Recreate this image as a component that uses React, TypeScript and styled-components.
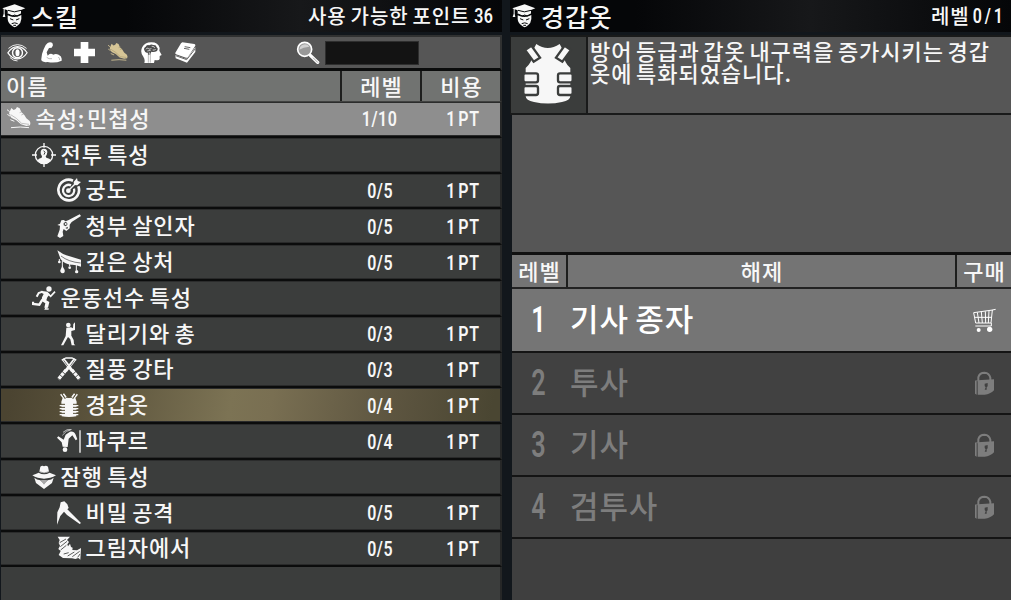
import type { ReactNode } from "react";
import styled, { createGlobalStyle, css } from "styled-components";

const COLOR_GUTTER = "#12171c";
const COLOR_LINE = "#0b0c0c";
const COLOR_ROW = "#3b3d3c";
const COLOR_PANEL = "#565656";
const COLOR_ACTIVE = "#d6c596";

const GlobalStyle = createGlobalStyle`
  * {
    box-sizing: border-box;
  }

  body {
    margin: 0;
    overflow: hidden;
    background-color: ${COLOR_GUTTER};
  }
`;

const StyledWindow = styled.main`
  display: grid;
  grid-template-columns: 502px 501px;
  gap: 8px;
  width: 1011px;
  height: 600px;
  overflow: hidden;
  background-color: ${COLOR_GUTTER};
  color: #f7f7f7;
  font-family: "Noto Sans CJK KR", sans-serif;
  font-size: 22px;
  font-weight: 500;
  letter-spacing: 0.9px;
  line-height: 24px;
  word-spacing: -1.4px;
  white-space: nowrap;
`;

const StyledPanel = styled.section`
  display: flex;
  flex-direction: column;
  min-width: 0;
  height: 600px;
  overflow: hidden;
`;

const StyledTitleBar = styled.header`
  display: flex;
  align-items: center;
  flex: none;
  height: 32px;
  margin-bottom: 3px;
  padding: 0 8px 0 2px;
  background: linear-gradient(90deg, #050608, #050608 25%, #17181a 60%, #050608);
`;

const StyledTitle = styled.h1`
  flex: 1;
  margin: 0 0 0 5px;
  font-size: 25px;
  font-weight: 500;
  line-height: 32px;
`;

const StyledTitleNote = styled.span<{ $gap: number }>`
  display: flex;
  align-items: center;
  gap: ${({ $gap }) => $gap}px;
  font-size: 20px;
`;

const StyledDigits = styled.span<{ $size?: number; $width?: number }>`
  display: inline-block;
  font-family: Roboto, sans-serif;
  font-size: ${({ $size = 21 }) => $size}px;
  font-weight: 600;
  letter-spacing: 0.8px;
  word-spacing: -3px;
  transform: scaleX(${({ $width = 0.76 }) => $width});
`;

const StyledNoteDigits = styled(StyledDigits)`
  margin-left: -8px;
  transform-origin: right;
`;

const StyledToolbar = styled.div`
  display: flex;
  align-items: center;
  flex: none;
  height: 36px;
  margin-left: 1px;
  border-top: 2px solid #303131;
  border-right: 2px solid #303131;
  border-bottom: 3px solid ${COLOR_LINE};
  background-color: ${COLOR_PANEL};
`;

const StyledCategory = styled.button<{ $active?: boolean }>`
  display: flex;
  align-items: center;
  justify-content: center;
  width: 33.5px;
  height: 28px;
  padding: 0;
  border: none;
  background: none;
  color: ${({ $active }) => ($active ? COLOR_ACTIVE : "#fff")};
`;

const StyledSearch = styled.label`
  display: flex;
  align-items: center;
  gap: 5px;
  margin-left: 94px;
`;

const StyledSearchInput = styled.input`
  width: 94px;
  height: 24px;
  padding: 0 4px;
  border: 1px solid #2e2e2e;
  background-color: #131313;
  color: #fff;
`;

const skillColumns = css`
  display: grid;
  grid-template-columns: 1fr 80px 80px;
  align-items: center;
  flex: none;
  margin-left: 1px;
  border-right: 2px solid #262727;
`;

const StyledSkillHeader = styled.div`
  ${skillColumns}
  height: 31px;
  background-color: #717371;
  border-bottom: 1px solid #414241;
`;

const StyledHeaderCell = styled.span<{ $align?: string }>`
  display: flex;
  align-items: center;
  justify-content: ${({ $align = "center" }) => $align};
  height: 100%;
  padding-left: ${({ $align }) => ($align ? "5px" : "1px")};
  padding-bottom: 3px;

  & + & {
    border-left: 2px solid #1d1e1d;
  }
`;

type Tone = "attribute" | "normal" | "selected";

const toneBackground: Record<Tone, string> = {
  attribute: "#8e8e8e",
  normal: COLOR_ROW,
  selected:
    "linear-gradient(100deg, #4b4431 2%, #5a523b 18%, #7c7354 46%, #796f52 54%, #5d5540 78%, #4a4632 98%)",
};

const StyledSkillRow = styled.div<{ $tone: Tone }>`
  ${skillColumns}
  height: 35.8px;
  padding-bottom: 2px;
  border-bottom: 2px solid ${COLOR_LINE};
  background: ${({ $tone }) => toneBackground[$tone]};
  box-shadow: inset 0 -1px #292a2a, inset 0 1px #2b2c2c;
  word-spacing: ${({ $tone }) => ($tone === "attribute" ? -4 : -1.4)}px;
`;

const StyledSkillName = styled.div<{ $level: number }>`
  display: flex;
  align-items: center;
  gap: 5px;
  padding-left: ${({ $level }) => 5.5 + $level * 25}px;
  padding-bottom: 2px;

  svg {
    flex: none;
    margin-top: 4px;
  }
`;

const StyledValue = styled.div`
  text-align: center;
`;

const StyledCost = styled(StyledValue)`
  padding-left: 5px;
`;

const StyledSkillFooter = styled.div`
  flex: 1;
  margin-left: 1px;
  border-right: 2px solid #262727;
  background-color: ${COLOR_ROW};
`;

const StyledSummary = styled.div`
  display: grid;
  grid-template-columns: 77px 1fr;
  flex: none;
  height: 80px;
  border: solid #191a1a;
  border-width: 2px 0 2px 1px;
`;

const StyledSummaryIcon = styled.div`
  display: flex;
  align-items: center;
  justify-content: center;
  padding: 0 1px 5px 0;
  border-right: 2px solid #191a1a;
  background-color: ${COLOR_ROW};
`;

const StyledDescription = styled.p`
  margin: 0;
  padding: 2px 0 0 2px;
  background-color: ${COLOR_PANEL};
  line-height: 22px;
  letter-spacing: 0.95px;
  word-spacing: -2.2px;
`;

const StyledBlank = styled.div`
  flex: none;
  height: 137px;
  margin-left: 2px;
  background-color: ${COLOR_PANEL};
`;

const rankColumns = css`
  display: grid;
  grid-template-columns: 54px 1fr 56px;
  align-items: center;
  flex: none;
  margin-left: 2px;
`;

const StyledRankHeader = styled.div`
  ${rankColumns}
  height: 37px;
  border-top: 3px solid #101010;
  border-bottom: 2px solid #222;
  background-color: #747474;
`;

const StyledRank = styled.div<{ $locked: boolean }>`
  ${rankColumns}
  height: 62.1px;
  padding-bottom: 1px;
  background-color: ${({ $locked }) => ($locked ? "#414141" : "#757575")};
  color: ${({ $locked }) => ($locked ? "#7d7d7d" : "#fff")};
  font-size: 31px;
  line-height: 56px;

  & + & {
    border-top: 2px solid #141414;
  }
`;

const StyledRankName = styled.span`
  padding: 0 0 3px 4px;
`;

const StyledRankIcon = styled.span`
  display: flex;
  justify-content: center;
  padding-left: 1px;
`;

const StyledRankFooter = styled.div`
  flex: 1;
  margin-left: 2px;
  border-top: 2px solid #141414;
  background-color: #3f3f3f;
`;

type IconProps = { size?: number; box?: string; children?: ReactNode };

const Icon = ({ size = 24, box = "0 0 72 72", children }: IconProps) => (
  <svg width={size} height={size} viewBox={box} fill="currentColor">
    {children}
  </svg>
);

const ScholarIcon = () => (
  <Icon>
    <path d="M1 13L38 1L70 13L57 18V29Q38 40 17 29V19L8 16V29L10 39H2L5 29V15Z" />
    <path d="M17 34Q38 44 58 33V45Q57 57 48 64Q38 75 28 64Q18 57 17 45Z" />
    <g fill="none" stroke="#08090b" strokeWidth="3">
      <path d="M18 19Q37 28 57 19M18 30L31 36L38 33L45 36L57 30M24 44L34 48M52 44L42 48M29 59Q38 54 47 59M34 64H42" />
    </g>
  </Icon>
);

const EyeIcon = () => (
  <Icon size={21}>
    <g fill="none" stroke="currentColor" strokeWidth="4">
      <path d="M3 37Q18 16 36 16Q55 16 69 37Q55 58 36 58Q18 58 3 37Z" />
      <path d="M5 22Q19 9 36 9Q53 9 67 22M10 53Q21 65 36 65" strokeWidth="3" />
      <circle cx="36" cy="37" r="17" strokeWidth="5" />
    </g>
    <ellipse cx="36" cy="37" rx="7" ry="12" />
  </Icon>
);

const ArmIcon = () => (
  <Icon size={21} box="0 0 63 63">
    <path d="M20 3Q28 -1 34 3L36 10L32 17L24 18L17 31L20 41Q27 32 37 38Q44 34 53 38Q62 42 62 50V56Q42 65 20 60Q4 62 1 55Q0 40 8 22Q12 8 20 3Z" />
    <path d="M17 46Q23 52 33 50M52 45Q56 48 56 54" stroke="#999" strokeWidth="2" fill="none" />
  </Icon>
);

const PlusIcon = () => (
  <Icon size={21} box="0 0 63 63">
    <path d="M20 0H43V20H63V43H43V63H20V43H0V20H20Z" />
  </Icon>
);

const ShoeIcon = ({ size = 24, shade = "#a4a4a4" }: { size?: number; shade?: string }) => (
  <Icon size={size}>
    <path d="M13 3L20 9Q27 8 30 0L38 4L43 15L52 24L58 34L68 42Q72 48 69 55L58 57L42 52L28 40L13 32L6 19Z" />
    <path
      d="M11 23L28 34L44 49L66 52M38 17L45 14M43 24L50 21"
      stroke={shade}
      strokeWidth="2"
      fill="none"
    />
    <path
      d="M0 8L8 14M1 22L10 28M10 38L22 43M12 62L40 60L66 62"
      stroke="currentColor"
      strokeWidth="3"
      fill="none"
    />
  </Icon>
);

const BrainIcon = () => (
  <Icon size={21} box="0 0 63 63">
    <path d="M10 63Q13 52 7 44Q-4 30 4 15Q11 1 31 1Q52 1 56 18L55 26L62 39L56 42V51Q54 57 41 54L39 63Z" />
    <path
      d="M10 25Q7 18 14 14Q17 7 25 10Q31 5 37 9Q46 8 47 16Q53 20 48 27Q40 31 31 29L27 39H22L20 32Q12 34 10 25Z"
      fill="#4d4d4d"
    />
    <path
      d="M15 22Q18 15 23 20T31 18M32 13Q40 12 41 18M19 27L29 25M35 24Q42 26 44 21M25 31V60"
      stroke="currentColor"
      fill="none"
      strokeWidth="2"
    />
    <path d="M22 36V62M28 36V62" stroke="#777" strokeWidth="1.5" />
  </Icon>
);

const BookIcon = () => (
  <Icon size={21} box="0 0 63 63">
    <path d="M22 1L58 6Q63 8 60 13L39 45Q37 48 33 47L3 37Q-1 35 2 31L18 4Z" />
    <path d="M1 39L34 51L61 16V30L36 62L2 49Z" />
    <path
      d="M2 41L35 53L61 20M29 14L46 17M27 19L43 22"
      stroke="#666"
      strokeWidth="3"
      fill="none"
    />
  </Icon>
);

const SearchIcon = () => (
  <Icon>
    <path d="M43 43L65 64" stroke="#fff" strokeWidth="10" strokeLinecap="round" />
    <path d="M51 50L66 65" stroke="#777" strokeWidth="2" />
    <circle cx="26" cy="25" r="21" fill="#999" stroke="#fff" strokeWidth="5" />
    <path d="M10 26Q12 11 27 10Q37 10 40 17Q21 19 10 26Z" fill="#d0d0d0" />
  </Icon>
);

const CrosshairIcon = () => (
  <Icon>
    <circle cx="36" cy="36" r="26" fill="none" stroke="currentColor" strokeWidth="4" />
    <path d="M36 0V14M0 36H15M57 36H72M36 60V72" stroke="currentColor" strokeWidth="4" />
    <path d="M36 17Q46 17 46 28Q45 37 41 40L43 44Q54 46 57 52Q49 63 36 63Q24 63 16 53Q19 46 29 44L30 40Q25 35 26 27Q27 17 36 17Z" />
    <path d="M35 23L39 28L36 35" stroke={COLOR_ROW} strokeWidth="3" fill="none" />
  </Icon>
);

const BullseyeIcon = () => (
  <Icon>
    <g fill="none" stroke="currentColor">
      <path d="M48 8A31 31 0 1 0 64 25" strokeWidth="8" />
      <path d="M42 22A17 17 0 1 0 51 32" strokeWidth="7" />
      <path d="M33 39L60 12" strokeWidth="4" />
    </g>
    <circle cx="34" cy="38" r="7" />
    <path d="M50 12L60 0L62 9L72 12L61 22L51 21Z" />
  </Icon>
);

const RevolverIcon = () => (
  <Icon>
    <path d="M68 1L72 6L44 24L38 32V43L28 51L20 45L17 53L19 66L9 72L1 67L8 47L9 35L1 33L9 29L13 19L20 18L26 22L35 18Z" />
    <path d="M20 27L27 23L32 30L27 37L20 34ZM25 42L33 38L31 45Z" fill={COLOR_ROW} />
    <circle cx="26" cy="30" r="3" />
  </Icon>
);

const WoundIcon = () => (
  <Icon>
    <path d="M1 1Q17 14 38 19L72 29V50Q54 43 43 44Q25 44 11 28Z" />
    <path d="M12 18Q35 36 71 39" fill="none" stroke={COLOR_ROW} strokeWidth="2" />
    <path d="M7 27V35M16 31V52M38 41V48M58 45V60" stroke="currentColor" strokeWidth="3" />
    <circle cx="7" cy="36" r="4" />
    <path d="M16 47L23 60Q25 69 17 70Q9 69 10 61Z" />
    <circle cx="38" cy="53" r="4" />
    <circle cx="59" cy="65" r="5" />
  </Icon>
);

const SprinterIcon = () => (
  <Icon>
    <circle cx="51" cy="9" r="8" />
    <path d="M26 14L46 17L53 25L46 34L43 43L52 48L48 65H37L40 52L29 45L30 34L35 24L28 20Z" />
    <g fill="none" stroke="currentColor">
      <path d="M32 17L20 21L14 32" strokeWidth="6" />
      <path d="M47 22L56 31L69 17" strokeWidth="5" />
      <path d="M31 41L22 56L3 54V47" strokeWidth="7" />
      <path d="M43 63L40 69H50" strokeWidth="4" />
    </g>
  </Icon>
);

const RunGunIcon = () => (
  <Icon>
    <circle cx="34" cy="9" r="7" />
    <path d="M28 17L42 16L48 19L49 6L54 1V24L43 27V41L50 54L51 66L55 70H44L40 52L33 45L24 61L19 70H12L26 42Z" />
  </Icon>
);

const BatonsIcon = () => (
  <Icon>
    <path d="M18 6L46 42M54 6L26 42" stroke="currentColor" strokeWidth="9" fill="none" />
    <path
      d="M27 39L4 67M45 39L68 67"
      stroke="currentColor"
      strokeWidth="10"
      strokeDasharray="10 2"
      fill="none"
    />
    <path d="M14 9L27 3H45L58 9" stroke="currentColor" strokeWidth="4" fill="none" />
    <path d="M20 10L32 27M52 10L40 27" stroke={COLOR_ROW} strokeWidth="2" />
  </Icon>
);

const VestIcon = () => (
  <Icon size={62} box="0 0 186 186">
    <path d="M58 6Q92 30 128 6L142 32Q137 58 160 78V162Q160 176 135 180Q93 189 51 180Q26 176 26 162V78Q50 57 45 30Z" />
    <g fill="currentColor" stroke={COLOR_ROW} strokeWidth="7">
      <path d="M24 24L43 11L69 47L50 59Z" />
      <path d="M162 24L143 11L117 47L136 59Z" />
      <rect x="19" y="94" width="44" height="27" rx="6" />
      <rect x="19" y="132" width="44" height="27" rx="6" />
      <rect x="123" y="94" width="44" height="27" rx="6" />
      <rect x="123" y="132" width="44" height="27" rx="6" />
    </g>
  </Icon>
);

const SmallVestIcon = () => (
  <Icon>
    <path d="M18 12Q36 18 54 12L59 26L58 70Q36 74 14 70L13 26Z" />
    <path d="M11 4L21 16M19 2L27 13M61 4L51 16M53 2L45 13" stroke="currentColor" strokeWidth="5" />
    <path d="M15 3L25 18M57 3L47 18" stroke="#544c37" strokeWidth="3" />
    <path
      d="M8 34H24M8 43H24M8 52H24M8 61H24M48 34H64M48 43H64M48 52H64M48 61H64"
      stroke="#544c37"
      strokeWidth="3"
    />
    <path
      d="M8 38H22M8 47H22M8 56H22M8 65H22M50 38H64M50 47H64M50 56H64M50 65H64"
      stroke="currentColor"
      strokeWidth="4"
    />
  </Icon>
);

const ParkourIcon = () => (
  <Icon>
    <circle cx="24" cy="62" r="7" />
    <path d="M17 53L14 40L0 26L4 22L20 32L26 17L39 8Q51 6 56 17L61 31L56 34L46 19L35 29L32 54Z" />
    <path
      d="M16 19Q28 3 41 3M18 10Q29 -1 44 1"
      stroke="currentColor"
      fill="none"
      strokeWidth="2"
    />
    <path d="M69 4V71" stroke="currentColor" strokeWidth="4" />
  </Icon>
);

const SpyIcon = () => (
  <Icon>
    <path d="M22 20L25 5Q31 0 36 4Q42 0 48 5L51 20Q36 28 22 20Z" />
    <path d="M1 31Q12 27 20 23Q36 32 53 23Q62 27 72 31Q56 41 36 41T1 31Z" />
    <path d="M7 38Q14 45 25 46L36 56L47 46Q59 45 65 38L60 54L36 72L12 54Z" />
    <path d="M26 45H46L36 59Z" fill="#a9a9a9" />
    <path d="M22 20Q36 28 51 20" stroke="#777" strokeWidth="2" fill="none" />
  </Icon>
);

const BladeIcon = () => (
  <Icon>
    <path d="M0 71L1 34L8 19L11 4L22 1L31 10L35 21L31 25L72 66L68 69L30 42L21 32L10 45Z" />
  </Icon>
);

const ShadowsIcon = () => (
  <Icon>
    <path d="M2 2H39L30 12L36 18L31 25L33 31L39 23L42 33L47 35L46 42L60 43L72 36L70 71L64 66L55 69L45 67L18 66L5 57L11 45L4 39L9 29L5 21L8 12Z" />
    <path
      d="M8 20L27 9M10 32L30 16M11 42L28 28M20 54L35 50M32 60L52 48M46 62L68 46M62 64L69 54"
      stroke={COLOR_ROW}
      strokeWidth="2.5"
    />
  </Icon>
);

const CartIcon = () => (
  <Icon>
    <g fill="none" stroke="currentColor" strokeWidth="3">
      <path d="M71 4L61 6L57 45H11L5 14L62 6M8 28H59M10 54H58V45M16 13L21 45M28 11L31 45M40 10L41 45M51 8L49 45" />
    </g>
    <circle cx="20" cy="66" r="6" />
    <circle cx="53" cy="64" r="8" />
  </Icon>
);

const LockIcon = () => (
  <Icon>
    <path
      d="M19 31V19Q22 5 38 5Q52 6 55 20V27"
      stroke="currentColor"
      strokeWidth="6"
      fill="none"
    />
    <path d="M9 29L14 27V71L9 68Z" />
    <path d="M17 28L66 25V58Q55 70 38 71H17Z" />
    <path d="M38 38L47 36V46L44 49V56H38L41 49L38 45Z" fill="#414141" />
  </Icon>
);

type Skill = {
  name: string;
  level: number;
  icon: ReactNode;
  rank?: string;
  tone?: Tone;
};

const skills: Skill[] = [
  { name: "속성: 민첩성", level: 0, icon: <ShoeIcon />, rank: "1/10", tone: "attribute" },
  { name: "전투 특성", level: 1, icon: <CrosshairIcon /> },
  { name: "궁도", level: 2, icon: <BullseyeIcon />, rank: "0/5" },
  { name: "청부 살인자", level: 2, icon: <RevolverIcon />, rank: "0/5" },
  { name: "깊은 상처", level: 2, icon: <WoundIcon />, rank: "0/5" },
  { name: "운동선수 특성", level: 1, icon: <SprinterIcon /> },
  { name: "달리기와 총", level: 2, icon: <RunGunIcon />, rank: "0/3" },
  { name: "질풍 강타", level: 2, icon: <BatonsIcon />, rank: "0/3" },
  { name: "경갑옷", level: 2, icon: <SmallVestIcon />, rank: "0/4", tone: "selected" },
  { name: "파쿠르", level: 2, icon: <ParkourIcon />, rank: "0/4" },
  { name: "잠행 특성", level: 1, icon: <SpyIcon /> },
  { name: "비밀 공격", level: 2, icon: <BladeIcon />, rank: "0/5" },
  { name: "그림자에서", level: 2, icon: <ShadowsIcon />, rank: "0/5" },
];

const ranks = ["기사 종자", "투사", "기사", "검투사"];

const SkillRow = ({ name, level, icon, rank, tone = "normal" }: Skill) => (
  <StyledSkillRow $tone={tone}>
    <StyledSkillName $level={level}>
      {icon}
      {name}
    </StyledSkillName>
    <StyledValue>{rank && <StyledDigits>{rank}</StyledDigits>}</StyledValue>
    <StyledCost>{rank && <StyledDigits>1 PT</StyledDigits>}</StyledCost>
  </StyledSkillRow>
);

const SkillPanel = () => (
  <StyledPanel>
    <StyledTitleBar>
      <ScholarIcon />
      <StyledTitle>스킬</StyledTitle>
      <StyledTitleNote $gap={6}>
        사용 가능한 포인트
        <StyledNoteDigits>36</StyledNoteDigits>
      </StyledTitleNote>
    </StyledTitleBar>
    <StyledToolbar>
      <StyledCategory>
        <EyeIcon />
      </StyledCategory>
      <StyledCategory>
        <ArmIcon />
      </StyledCategory>
      <StyledCategory>
        <PlusIcon />
      </StyledCategory>
      <StyledCategory $active>
        <ShoeIcon size={20} shade="#a3966f" />
      </StyledCategory>
      <StyledCategory>
        <BrainIcon />
      </StyledCategory>
      <StyledCategory>
        <BookIcon />
      </StyledCategory>
      <StyledSearch>
        <SearchIcon />
        <StyledSearchInput />
      </StyledSearch>
    </StyledToolbar>
    <StyledSkillHeader>
      <StyledHeaderCell $align="flex-start">이름</StyledHeaderCell>
      <StyledHeaderCell>레벨</StyledHeaderCell>
      <StyledHeaderCell>비용</StyledHeaderCell>
    </StyledSkillHeader>
    {skills.map((skill) => (
      <SkillRow key={skill.name} {...skill} />
    ))}
    <StyledSkillFooter />
  </StyledPanel>
);

const DetailPanel = () => (
  <StyledPanel>
    <StyledTitleBar>
      <ScholarIcon />
      <StyledTitle>경갑옷</StyledTitle>
      <StyledTitleNote $gap={1}>
        레벨
        <StyledNoteDigits>0 / 1</StyledNoteDigits>
      </StyledTitleNote>
    </StyledTitleBar>
    <StyledSummary>
      <StyledSummaryIcon>
        <VestIcon />
      </StyledSummaryIcon>
      <StyledDescription>
        방어 등급과 갑옷 내구력을 증가시키는 경갑
        <br />
        옷에 특화되었습니다.
      </StyledDescription>
    </StyledSummary>
    <StyledBlank />
    <StyledRankHeader>
      <StyledHeaderCell>레벨</StyledHeaderCell>
      <StyledHeaderCell>해제</StyledHeaderCell>
      <StyledHeaderCell>구매</StyledHeaderCell>
    </StyledRankHeader>
    {ranks.map((name, index) => (
      <StyledRank key={name} $locked={index > 0}>
        <StyledValue>
          <StyledDigits $size={36} $width={0.7}>
            {index + 1}
          </StyledDigits>
        </StyledValue>
        <StyledRankName>{name}</StyledRankName>
        <StyledRankIcon>{index > 0 ? <LockIcon /> : <CartIcon />}</StyledRankIcon>
      </StyledRank>
    ))}
    <StyledRankFooter />
  </StyledPanel>
);

const App = () => (
  <>
    <GlobalStyle />
    <StyledWindow>
      <SkillPanel />
      <DetailPanel />
    </StyledWindow>
  </>
);

export default App;
